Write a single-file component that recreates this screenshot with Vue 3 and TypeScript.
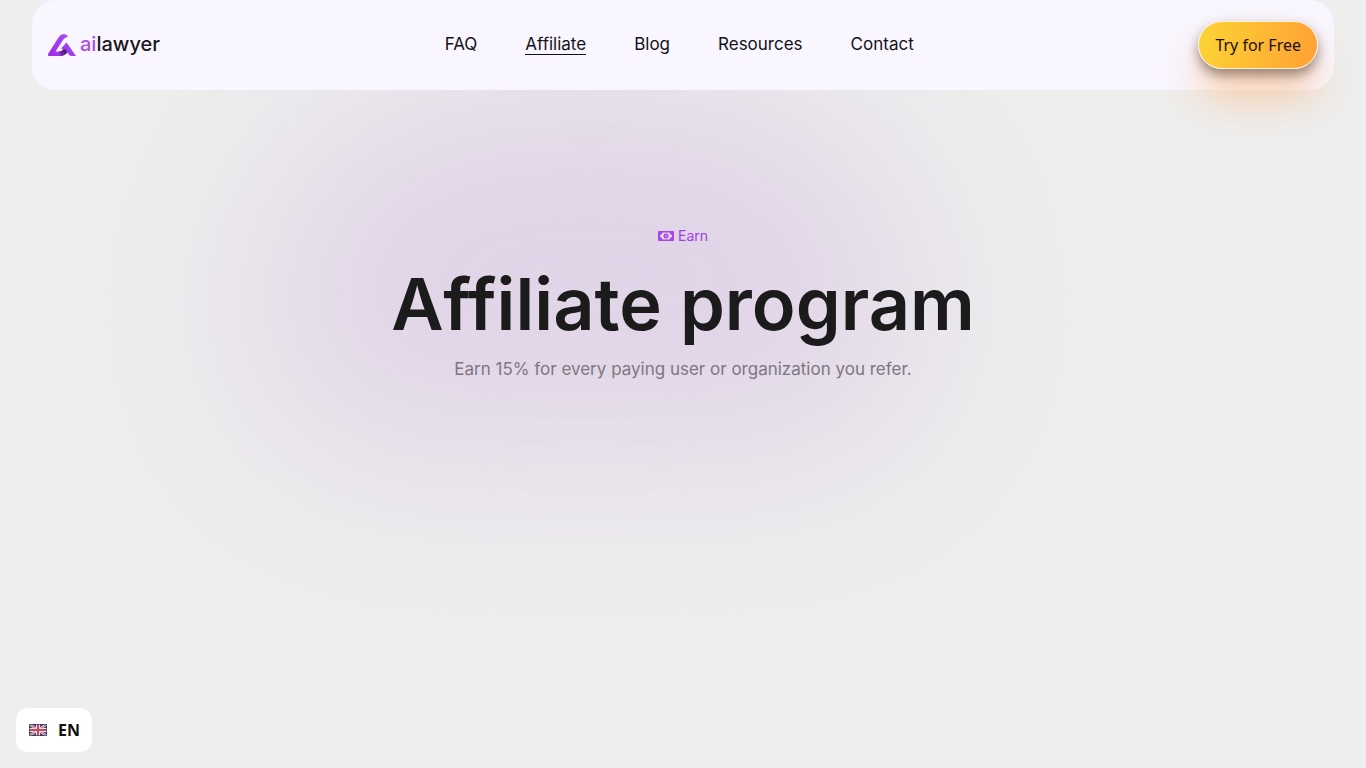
<script setup lang="ts">
interface NavLink {
  label: string
  href: string
  active?: boolean
}

const links: NavLink[] = [
  { label: 'FAQ', href: '#faq' },
  { label: 'Affiliate', href: '#affiliate', active: true },
  { label: 'Blog', href: '#blog' },
  { label: 'Resources', href: '#resources' },
  { label: 'Contact', href: '#contact' },
]
</script>

<template>
  <div class="page">
    <div class="glow" aria-hidden="true"></div>

    <header class="header">
      <a class="logo" href="#home">
        <svg class="logo-mark" viewBox="0 0 28 22" aria-hidden="true">
          <defs>
            <linearGradient id="mark" x1="0" y1="1" x2="1" y2="0">
              <stop offset="0" stop-color="#a02bea" />
              <stop offset="1" stop-color="#a84df0" />
            </linearGradient>
            <linearGradient id="fold" x1="0" y1="1" x2="1" y2="0">
              <stop offset="0" stop-color="#8a30cf" />
              <stop offset=".6" stop-color="#451a6c" />
            </linearGradient>
          </defs>
          <path d="M0 20 11 2.800Q13 0 16 0 18.800.2 20 3 17 2.800 15 6L7.500 17.500H11.500L15 21.500Q14 22 13 22H1Q-.6 21.800 0 20Z" fill="url(#mark)" />
          <path d="M11 17.500Q13.500 17.300 15 15.500L18 12 20.500 17 18 20Q16 22 12.500 22Z" fill="url(#fold)" />
          <path d="M13 14.500 18.500 8.500 28 22H23.500Q21.500 22 20.300 20L17.500 15.500 15.500 15.500Z" fill="#a13cf0" />
        </svg>
        <span class="logo-text"><span class="logo-ai">ai</span>lawyer</span>
      </a>

      <nav class="nav" aria-label="Main">
        <a
          v-for="link in links"
          :key="link.label"
          :href="link.href"
          :class="['nav-link', { active: link.active }]"
          :aria-current="link.active ? 'page' : undefined"
        >{{ link.label }}</a>
      </nav>

      <button class="cta" type="button">Try for Free</button>
    </header>

    <main class="hero">
      <p class="badge">
        <svg class="badge-icon" viewBox="0 0 16 10" aria-hidden="true">
          <path fill-rule="evenodd" d="M1 0H15Q16 0 16 1V9Q16 10 15 10H1Q0 10 0 9V1Q0 0 1 0ZM4.500 1.500Q4 3.700 2 4V6Q4 6.300 4.500 8.500H11.500Q12 6.300 14 6V4Q12 3.700 11.500 1.500Z" fill="#a946e4" />
          <circle cx="8" cy="5" r="2.500" fill="#a946e4" />
          <circle cx="8" cy="5" r="1" fill="#cf9de8" />
        </svg>
        <span>Earn</span>
      </p>
      <h1 class="title">Affiliate program</h1>
      <p class="subtitle">Earn 15% for every paying user or organization you refer.</p>
    </main>

    <button class="language" type="button" aria-label="Language: EN">
      <svg class="flag" viewBox="0 0 18 12" aria-hidden="true">
        <rect width="18" height="12" fill="#3a4278" />
        <path d="M0 0 18 12M18 0 0 12" stroke="#d9d2e0" stroke-width="2.600" />
        <path d="M0 0 18 12M18 0 0 12" stroke="#c25a6c" stroke-width="1" />
        <path d="M9 0V12M0 6H18" stroke="#ecdfe6" stroke-width="4" />
        <path d="M9 0V12M0 6H18" stroke="#c8485a" stroke-width="2" />
        <rect x=".5" y=".5" width="17" height="11" fill="none" stroke="#2e3155" stroke-opacity=".6" />
      </svg>
      <span>EN</span>
    </button>
  </div>
</template>

<style>
body {
  margin: 0;
  background: #eee;
}
</style>

<style scoped>
.page {
  position: relative;
  min-height: 100vh;
  overflow: hidden;
  background: #eee;
  color: #1b1b1b;
  font-family: Inter, "Liberation Sans", sans-serif;
}

.glow {
  position: absolute;
  top: 90px;
  left: 19%;
  width: 48%;
  height: 360px;
  border-radius: 260px 260px 140px 140px;
  background: #e0d3e7;
  filter: blur(90px);
}

.header {
  position: relative;
  display: flex;
  align-items: center;
  justify-content: space-between;
  height: 90px;
  margin: 0 32px;
  padding: 0 16px;
  box-sizing: border-box;
  border-radius: 24px;
  background: #f9f6ff;
}

.logo {
  display: flex;
  align-items: center;
  gap: 4px;
  color: #1b1720;
  text-decoration: none;
}

.logo-mark {
  width: 28px;
  height: 22px;
}

.logo-text {
  margin-bottom: 2px;
  font-size: 20px;
  font-weight: 500;
  line-height: 24px;
}

.logo-ai {
  color: #a94cec;
}

.nav {
  display: flex;
  gap: 48px;
}

.nav-link {
  margin-bottom: 1px;
  border-bottom: 1px solid transparent;
  color: #141218;
  font-size: 17px;
  line-height: 20px;
  text-decoration: none;
}

.nav-link.active {
  border-color: #141218;
}

.cta {
  height: 48px;
  padding: 0 16px;
  border: 1px solid #fff3dd;
  border-radius: 24px;
  background: linear-gradient(100deg, #fcd434 0%, #ffa035 100%);
  box-shadow: 0 6px 12px rgba(60, 40, 30, 0.5), 0 30px 40px rgba(255, 165, 85, 0.45);
  color: #1b1208;
  font: 16px/22px "Noto Sans", sans-serif;
}

.hero {
  position: relative;
  display: flex;
  flex-direction: column;
  align-items: center;
  padding: 130px 24px 0;
  text-align: center;
}

.badge {
  display: flex;
  align-items: center;
  gap: 4px;
  margin: 0;
  padding: 4px 8px;
  border: 1px solid rgba(225, 208, 222, 0.4);
  border-radius: 8px;
  color: #a33fe0;
  font-size: 14px;
  line-height: 22px;
}

.badge-icon {
  width: 16px;
  height: 10px;
}

.title {
  margin: 12px 0 0;
  font-size: 72px;
  font-weight: 600;
  line-height: 80px;
}

.subtitle {
  margin: 12px 0 0;
  color: #7d7781;
  font-size: 17px;
  line-height: 26px;
}

.language {
  position: fixed;
  bottom: 16px;
  left: 16px;
  display: flex;
  align-items: center;
  gap: 11px;
  height: 44px;
  padding: 0 12px 0 13px;
  border: 0;
  border-radius: 12px;
  background: #fff;
  color: #111;
  font: 700 16px/22px "Noto Sans", sans-serif;
}

.flag {
  width: 18px;
  height: 12px;
}
</style>
